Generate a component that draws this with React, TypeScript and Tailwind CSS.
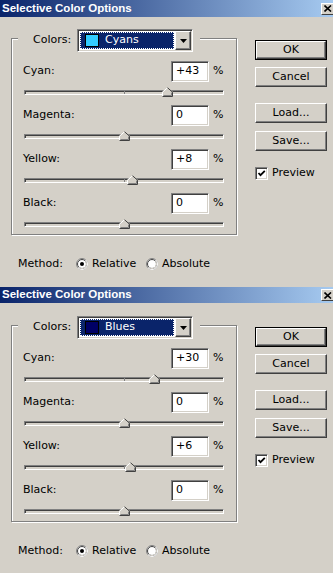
import React from "react";

type DialogData = {
  colorName: string;
  swatch: string;
  values: number[];
};

const labels = ["Cyan", "Magenta", "Yellow", "Black"];

const dialogs: DialogData[] = [
  { colorName: "Cyans", swatch: "#33ccff", values: [43, 0, 8, 0] },
  { colorName: "Blues", swatch: "#000066", values: [30, 0, 6, 0] },
];

function fmt(v: number) {
  return v > 0 ? `+${v}` : `${v}`;
}

function Button({ children, isDefault }: { children: React.ReactNode; isDefault?: boolean }) {
  const inner = (
    <div className="flex h-full items-center justify-center border border-t-white border-l-white border-r-[#404040] border-b-[#404040] shadow-[inset_-1px_-1px_0_#808080]">
      {children}
    </div>
  );
  return isDefault ? (
    <div className="h-[20px] w-[72px] border border-black">{inner}</div>
  ) : (
    <div className="h-[20px] w-[72px]">{inner}</div>
  );
}

function CloseBox() {
  return (
    <div className="-mr-[2px] flex h-[12px] w-[14px] shrink-0 items-center justify-center bg-[#d4d0c8] border border-t-white border-l-white border-r-[#404040] border-b-[#404040]">
      <svg width="8" height="7" viewBox="0 0 8 7">
        <path d="M0.5 0.5 L7 6.5 M7 0.5 L0.5 6.5" stroke="#000" strokeWidth="1.6" />
      </svg>
    </div>
  );
}

function Thumb({ value }: { value: number }) {
  return (
    <svg
      className="absolute top-0"
      style={{ left: 100 + value - 5 }}
      width="11"
      height="10"
      viewBox="0 0 11 10"
    >
      <polygon points="0,10 0,5 5.5,0 11,5 11,10" fill="#d4d0c8" />
      <polyline points="0.5,9.5 0.5,5.2 5.5,0.7" fill="none" stroke="#fff" />
      <polyline points="5.5,0.7 10.5,5.2 10.5,9.5 0.5,9.5" fill="none" stroke="#404040" />
      <polyline points="9.5,5.6 9.5,8.5 1.5,8.5" fill="none" stroke="#808080" />
    </svg>
  );
}

function Slider({ value }: { value: number }) {
  return (
    <div className="relative ml-[1px] mt-[5px] h-[10px] w-[200px] pt-[3px]">
      <div className="h-[5px] border border-t-[#808080] border-l-[#808080] border-b-white border-r-white bg-[#d4d0c8] shadow-[inset_1px_1px_0_#404040]" />
      <div className="absolute left-[100px] top-[4px] h-[3px] w-px bg-[#808080]" />
      <Thumb value={value} />
    </div>
  );
}

function Radio({ checked }: { checked?: boolean }) {
  return (
    <svg width="12" height="12" viewBox="0 0 12 12" className="shrink-0">
      <circle cx="6" cy="6" r="5.5" fill="#fff" stroke="#808080" />
      <circle cx="6" cy="6" r="4.5" fill="#fff" stroke="#404040" />
      <path d="M9.89 2.11 A5.5 5.5 0 0 1 2.11 9.89" fill="none" stroke="#fff" />
      <path d="M9.18 2.82 A4.5 4.5 0 0 1 2.82 9.18" fill="none" stroke="#d4d0c8" />
      {checked && <circle cx="6" cy="6" r="2" fill="#000" />}
    </svg>
  );
}

function Checkbox() {
  return (
    <div className="h-[13px] w-[13px] shrink-0 border border-t-[#808080] border-l-[#808080] border-b-white border-r-white bg-white shadow-[inset_1px_1px_0_#404040,inset_-1px_-1px_0_#d4d0c8]">
      <svg width="11" height="11" viewBox="0 0 11 11">
        <polyline points="2.5,5 4.5,7.2 8.8,2.8" fill="none" stroke="#000" strokeWidth="1.8" />
      </svg>
    </div>
  );
}

function Dropdown({ name, swatch }: { name: string; swatch: string }) {
  return (
    <div className="flex h-[23px] w-[116px] shrink-0 border border-t-[#808080] border-l-[#808080] border-b-white border-r-white bg-white p-px shadow-[inset_1px_1px_0_#404040,inset_-1px_-1px_0_#d4d0c8]">
      <div className="m-px flex flex-1 items-center border border-dotted border-white bg-[#0a246a] pl-[4px]">
        <div className="h-[13px] w-[14px] border border-black" style={{ backgroundColor: swatch }} />
        <span className="ml-[6px] text-white">{name}</span>
      </div>
      <div className="flex w-[16px] items-center justify-center bg-[#d4d0c8] border border-t-white border-l-white border-r-[#404040] border-b-[#404040] shadow-[inset_-1px_-1px_0_#808080]">
        <svg width="7" height="4" viewBox="0 0 7 4">
          <polygon points="0,0 7,0 3.5,4" fill="#000" />
        </svg>
      </div>
    </div>
  );
}

function Dialog({ data, first }: { data: DialogData; first?: boolean }) {
  return (
    <div className={first ? "h-[285px] overflow-hidden" : "h-[288px] overflow-hidden"}>
      <div className="h-[18px]">
        <div
          className={
            first
              ? "flex h-[17px] items-center overflow-hidden bg-[linear-gradient(to_right,#0a246a,#a6caf0)] pl-[2px]"
              : "mt-[2px] flex h-[16px] items-center overflow-hidden bg-[linear-gradient(to_right,#0a246a,#a6caf0)] pl-[2px]"
          }
        >
          <span className="flex-1 font-['Liberation_Sans',sans-serif] text-[11.5px] font-bold text-white">
            Selective Color Options
          </span>
          <CloseBox />
        </div>
      </div>

      <div className="flex">
        <div className="w-[255px] shrink-0">
          <div className="relative ml-[11px] mt-[20px] h-[197px] w-[226px] border border-[#808080] pl-[11px] pt-[22px] shadow-[inset_1px_1px_0_#fff,1px_1px_0_#fff]">
            <div className="absolute -top-[10px] left-[6px] flex h-[23px] items-center bg-[#d4d0c8] pl-[15px] pr-[7px]">
              <span className="w-[44px]">Colors:</span>
              <Dropdown name={data.colorName} swatch={data.swatch} />
            </div>

            {labels.map((label, i) => (
              <div key={label} className="h-[44px] w-[201px]">
                <div className="flex h-[21px] items-center">
                  <span className="flex-1">{label}:</span>
                  <div className="flex h-[21px] w-[38px] items-center border border-t-[#808080] border-l-[#808080] border-b-white border-r-white bg-white pl-[4px] shadow-[inset_1px_1px_0_#404040,inset_-1px_-1px_0_#d4d0c8]">
                    {fmt(data.values[i])}
                  </div>
                  <span className="ml-[4px] w-[11px]">%</span>
                </div>
                <Slider value={data.values[i]} />
              </div>
            ))}
          </div>

          <div className="mt-[21px] flex h-[16px] items-center pl-[18px]">
            <span className="w-[58px]">Method:</span>
            <Radio checked />
            <span className="ml-[4px] w-[54px]">Relative</span>
            <Radio />
            <span className="ml-[4px]">Absolute</span>
          </div>
        </div>

        <div className="flex flex-col pt-[22px]">
          <Button isDefault>OK</Button>
          <div className="mt-[7px]">
            <Button>Cancel</Button>
          </div>
          <div className="mt-[16px]">
            <Button>Load...</Button>
          </div>
          <div className="mt-[8px]">
            <Button>Save...</Button>
          </div>
          <div className="mt-[14px] flex items-center">
            <Checkbox />
            <span className="ml-[4px]">Preview</span>
          </div>
        </div>
      </div>
    </div>
  );
}

export default function App() {
  return (
    <div className="h-[573px] w-[333px] overflow-hidden bg-[#d4d0c8] font-['DejaVu_Sans',sans-serif] text-[11px] text-black">
      <Dialog data={dialogs[0]} first />
      <Dialog data={dialogs[1]} />
    </div>
  );
}
